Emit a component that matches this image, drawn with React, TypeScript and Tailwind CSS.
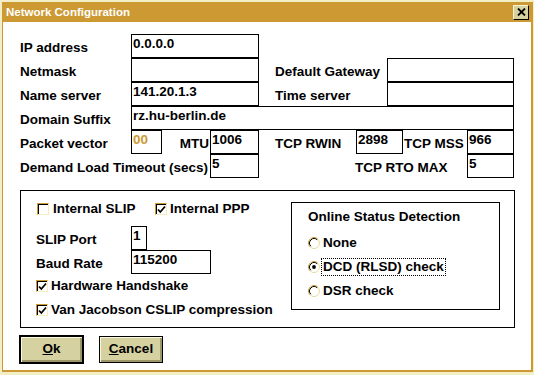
import type { ReactNode } from "react";

function Label({ className = "", children }: { className?: string; children?: ReactNode }) {
  return (
    <div className={`shrink-0 pt-[6px] leading-[16px] whitespace-nowrap ${className}`}>
      {children}
    </div>
  );
}

function Box({ className = "", children }: { className?: string; children?: ReactNode }) {
  return (
    <div
      className={`shrink-0 h-[24px] border border-black bg-white px-[1px] pt-[1px] leading-[16px] whitespace-nowrap ${className}`}
    >
      {children}
    </div>
  );
}

function Check({ checked }: { checked?: boolean }) {
  return (
    <span className="flex h-[12px] w-[12px] shrink-0 border-t border-l border-b border-r border-t-[#cc9933] border-l-[#cc9933] border-b-[#f3edbf] border-r-[#f3edbf]">
      <span className="flex flex-1 items-center justify-center border-t border-l border-black bg-white">
        {checked && (
          <svg width="9" height="9" viewBox="0 0 9 9">
            <path d="M1 4.5 L3.3 7 L8 1.5" fill="none" stroke="black" strokeWidth="1.8" />
          </svg>
        )}
      </span>
    </span>
  );
}

function Radio({ checked }: { checked?: boolean }) {
  return (
    <svg width="12" height="12" viewBox="0 0 12 12" className="shrink-0">
      <circle cx="6" cy="6" r="4.5" fill="white" />
      <path d="M2.11 9.89 A5.5 5.5 0 0 1 9.89 2.11" fill="none" stroke="#cc9933" strokeWidth="1" />
      <path d="M9.89 2.11 A5.5 5.5 0 0 1 2.11 9.89" fill="none" stroke="#e6dc9c" strokeWidth="1" />
      <path d="M2.82 9.18 A4.5 4.5 0 0 1 9.18 2.82" fill="none" stroke="black" strokeWidth="1" />
      {checked && <circle cx="6" cy="6" r="1.9" fill="black" />}
    </svg>
  );
}

function RadioRow({ label, checked, focus }: { label: string; checked?: boolean; focus?: boolean }) {
  return (
    <div className="flex h-[24px] items-center">
      <Radio checked={checked} />
      <span
        className={`ml-[1px] px-[1px] leading-[16px] border ${
          focus ? "border-dotted border-black" : "border-transparent"
        }`}
      >
        {label}
      </span>
    </div>
  );
}

export default function App() {
  return (
    <div className="w-[534px] h-[375px] overflow-hidden bg-[#f2eec6] pl-[2px] pt-[2px] pr-[1px] pb-[3px] font-['Liberation_Sans',Arial,sans-serif] text-[13.5px] font-bold text-black">
      <div className="flex h-full flex-col border-l border-r-2 border-b-2 border-[#cc9933] bg-white">
        {/* Title bar */}
        <div className="flex h-[20px] shrink-0 items-center justify-between bg-[#cc9933] pl-[3px] pr-[2px]">
          <span className="text-[11.5px] leading-[14px] text-white">Network Configuration</span>
          <button className="flex h-[15px] w-[16px] items-center justify-center border border-t-[#f7f3d2] border-l-[#f7f3d2] border-b-black border-r-black bg-[#d5d1a1]">
            <svg width="9" height="8" viewBox="0 0 9 8">
              <path d="M1 0.5 L8 7.5 M8 0.5 L1 7.5" stroke="black" strokeWidth="1.8" />
            </svg>
          </button>
        </div>

        {/* Client area */}
        <div className="pl-[17px] pt-[12px]">
          <div className="flex h-[24px]">
            <Label className="w-[111px]">IP address</Label>
            <Box className="w-[128px]">0.0.0.0</Box>
          </div>
          <div className="flex h-[24px]">
            <Label className="w-[111px]">Netmask</Label>
            <Box className="w-[128px]" />
            <Label className="ml-[16px] w-[112px]">Default Gateway</Label>
            <Box className="w-[127px]" />
          </div>
          <div className="flex h-[24px]">
            <Label className="w-[111px]">Name server</Label>
            <Box className="w-[128px]">141.20.1.3</Box>
            <Label className="ml-[16px] w-[112px]">Time server</Label>
            <Box className="w-[127px]" />
          </div>
          <div className="flex h-[24px]">
            <Label className="w-[111px]">Domain Suffix</Label>
            <Box className="w-[383px]">rz.hu-berlin.de</Box>
          </div>
          <div className="flex h-[24px]">
            <Label className="w-[111px]">Packet vector</Label>
            <Box className="w-[31px] text-[#cc9933]">00</Box>
            <Label className="w-[48px] pr-[1px] text-right">MTU</Label>
            <Box className="w-[49px]">1006</Box>
            <Label className="ml-[16px] w-[81px]">TCP RWIN</Label>
            <Box className="w-[47px]">2898</Box>
            <Label className="w-[64px] pl-[1px]">TCP MSS</Label>
            <Box className="w-[47px]">966</Box>
          </div>
          <div className="flex h-[24px]">
            <Label className="w-[190px]">Demand Load Timeout (secs)</Label>
            <Box className="w-[49px]">5</Box>
            <Label className="ml-[96px] w-[112px]">TCP RTO MAX</Label>
            <Box className="w-[47px]">5</Box>
          </div>

          {/* Serial group */}
          <div className="mt-[12px] flex h-[138px] w-[495px] border border-black">
            <div className="flex-1 pl-[15px] pt-[6px]">
              <div className="flex h-[24px] items-center">
                <div className="flex w-[119px] items-center gap-[4px] pl-[1px]">
                  <Check />
                  <span>Internal SLIP</span>
                </div>
                <div className="flex items-center gap-[3px]">
                  <Check checked />
                  <span>Internal PPP</span>
                </div>
              </div>
              <div className="mt-[5px] flex h-[24px]">
                <Label className="w-[95px]">SLIP Port</Label>
                <Box className="w-[16px]">1</Box>
              </div>
              <div className="flex h-[24px]">
                <Label className="w-[95px]">Baud Rate</Label>
                <Box className="w-[80px]">115200</Box>
              </div>
              <div className="flex h-[24px] items-center gap-[3px]">
                <Check checked />
                <span>Hardware Handshake</span>
              </div>
              <div className="flex h-[24px] items-center gap-[3px]">
                <Check checked />
                <span>Van Jacobson CSLIP compression</span>
              </div>
            </div>

            <div className="mt-[11px] mr-[14px] h-[108px] w-[209px] border border-black pl-[16px] pt-[2px]">
              <div className="flex h-[24px] items-center">Online Status Detection</div>
              <div className="mt-[2px]">
                <RadioRow label="None" />
                <RadioRow label="DCD (RLSD) check" checked focus />
                <RadioRow label="DSR check" />
              </div>
            </div>
          </div>

          {/* Buttons */}
          <div className="mt-[7px] flex items-center -ml-[1px]">
            <button className="flex h-[29px] w-[65px] items-center justify-center border-2 border-black bg-[#d5d1a1] shadow-[inset_1px_1px_0_#fbf8dc,inset_-2px_-2px_0_#9c9668]">
              <span>
                <span className="underline">O</span>k
              </span>
            </button>
            <button className="ml-[15px] flex h-[27px] w-[64px] items-center justify-center border border-black bg-[#d5d1a1] shadow-[inset_1px_1px_0_#fbf8dc,inset_-2px_-2px_0_#9c9668]">
              <span>
                <span className="underline">C</span>ancel
              </span>
            </button>
          </div>
        </div>
      </div>
    </div>
  );
}
